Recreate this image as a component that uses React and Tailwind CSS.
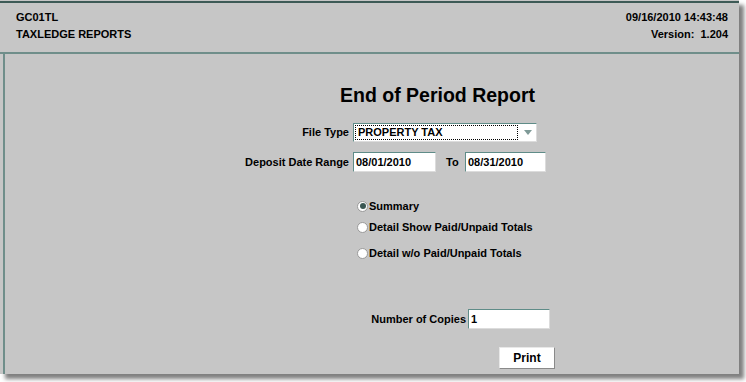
import React from 'react';

const font = { fontFamily: '"Liberation Sans", Arial, sans-serif' };

const Field = ({ value, className = '' }) => (
  <div
    className={`flex items-center bg-white border border-t-[#5f8c88] border-l-[#5f8c88] border-r-[#dcdcdc] border-b-[#dcdcdc] pl-[2px] text-[11px] font-bold text-black ${className}`}
  >
    {value}
  </div>
);

const Radio = ({ label, checked }) => (
  <div className="flex items-center h-[16px] ml-[352px]">
    <span className="w-[11px] h-[11px] rounded-full bg-white border border-[#9a9a9a] flex items-center justify-center">
      {checked && <span className="w-[6px] h-[6px] rounded-full bg-[#3a5753]" />}
    </span>
    <span className="ml-[1px] text-[11px] font-bold text-black">{label}</span>
  </div>
);

export default function App() {
  return (
    <div className="w-[746px] h-[382px] bg-white" style={font}>
      <div className="w-[739px] h-[374px] bg-[#c6c6c6] flex flex-col shadow-[5px_5px_4px_rgba(0,0,0,0.5)]">
        {/* header */}
        <div className="mt-[1px] h-[51px] border-t-2 border-[#3d5a56] flex justify-between text-[11px] font-bold text-black">
          <div className="pl-[16px] pt-[6px] leading-[17px]">
            <div>GC01TL</div>
            <div>TAXLEDGE REPORTS</div>
          </div>
          <div className="pr-[11px] pt-[6px] leading-[17px] text-right">
            <div>09/16/2010 14:43:48</div>
            <div>Version:&nbsp;&nbsp;1.204</div>
          </div>
        </div>
        <div className="h-[2px] bg-[#6f8e8a]" />

        {/* body */}
        <div className="flex-1 ml-[3px] border-l-2 border-[#6f8e8a] flex flex-col pt-[29px]">
          <div className="ml-[335px] h-[24px] leading-[24px] text-[19.5px] font-bold text-black">
            End of Period Report
          </div>

          <div className="mt-[16px] flex items-center h-[19px]">
            <div className="w-[344px] text-right text-[11px] font-bold">File Type</div>
            <div className="ml-[4px] w-[184px] h-[19px] flex bg-white border border-t-[#5f8c88] border-l-[#5f8c88] border-r-[#dcdcdc] border-b-[#dcdcdc]">
              <div className="flex-1 m-[1px] border border-dotted border-black flex items-center pl-[2px] text-[11px] font-bold">
                PROPERTY TAX
              </div>
              <div className="w-[17px] flex items-center justify-center">
                <svg width="8" height="5" viewBox="0 0 8 5">
                  <path d="M0 0h8L4 5z" fill="#7f9a97" />
                </svg>
              </div>
            </div>
          </div>

          <div className="mt-[10px] flex items-center h-[20px] text-[11px] font-bold">
            <div className="w-[344px] text-right">Deposit Date Range</div>
            <Field value="08/01/2010" className="ml-[4px] w-[83px] h-[20px]" />
            <div className="ml-[10px] w-[19px]">To</div>
            <Field value="08/31/2010" className="w-[81px] h-[20px]" />
          </div>

          <div className="mt-[26px]">
            <Radio label="Summary" checked />
          </div>
          <div className="mt-[5px]">
            <Radio label="Detail Show Paid/Unpaid Totals" />
          </div>
          <div className="mt-[10px]">
            <Radio label="Detail w/o Paid/Unpaid Totals" />
          </div>

          <div className="mt-[48px] flex items-center h-[20px] text-[11px] font-bold">
            <div className="w-[461px] text-right">Number of Copies</div>
            <Field value="1" className="ml-[2px] w-[82px] h-[20px]" />
          </div>

          <div className="mt-[18px] ml-[494px] w-[56px] h-[22px] bg-white border border-t-[#e8e8e8] border-l-[#e8e8e8] border-r-[#8a8a8a] border-b-[#8a8a8a] flex items-center justify-center text-[12px] font-bold">
            Print
          </div>
        </div>
      </div>
    </div>
  );
}
